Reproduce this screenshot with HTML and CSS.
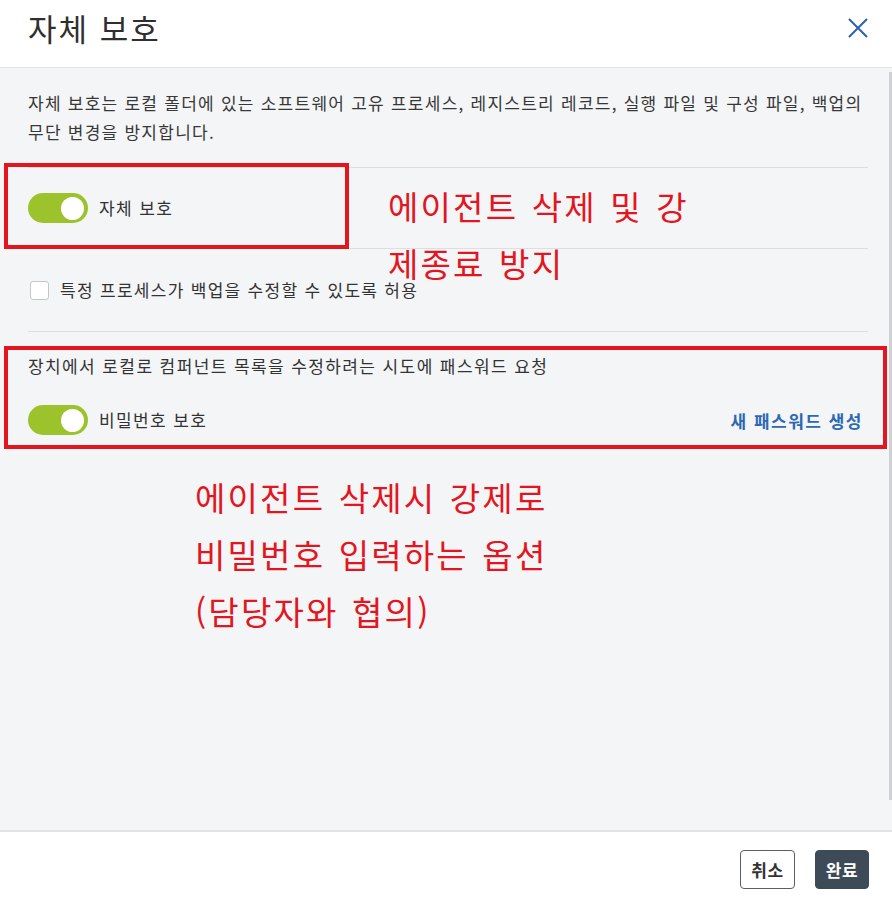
FILE: index.html
```html
<!DOCTYPE html>
<html lang="ko">
<head>
<meta charset="utf-8">
<title>자체 보호</title>
<link rel="stylesheet" href="styles.css">
</head>
<body>
<div class="dialog">
  <header class="dlg-header">
    <h1 class="dlg-title">자체 보호</h1>
    <button class="close-btn" aria-label="닫기">
      <svg width="22" height="22" viewBox="0 0 22 22"><path d="M2 2 L20 20 M20 2 L2 20" stroke="#2b62ab" stroke-width="2" fill="none"/></svg>
    </button>
  </header>
  <main class="dlg-body">
    <p class="desc">자체 보호는 로컬 폴더에 있는 소프트웨어 고유 프로세스, 레지스트리 레코드, 실행 파일 및 구성 파일, 백업의 무단 변경을 방지합니다.</p>
    <div class="section toggle-section">
      <div class="toggle-row">
        <span class="toggle on"><span class="knob"></span></span>
        <span class="label">자체 보호</span>
      </div>
    </div>
    <div class="section check-section">
      <label class="check-row">
        <span class="checkbox"></span>
        <span class="label">특정 프로세스가 백업을 수정할 수 있도록 허용</span>
      </label>
    </div>
    <div class="section pw-section">
      <p class="pw-desc">장치에서 로컬로 컴퍼넌트 목록을 수정하려는 시도에 패스워드 요청</p>
      <div class="toggle-row spread">
        <div class="toggle-left">
          <span class="toggle on"><span class="knob"></span></span>
          <span class="label">비밀번호 보호</span>
        </div>
        <a class="link">새 패스워드 생성</a>
      </div>
    </div>
    <div class="scrollbar"></div>
  </main>
  <footer class="dlg-footer">
    <button class="btn btn-outline">취소</button>
    <button class="btn btn-primary">완료</button>
  </footer>

  <div class="mark mark-1"></div>
  <div class="mark mark-2"></div>
  <div class="note note-1">에이전트 삭제 및 강<br>제종료 방지</div>
  <div class="note note-2">에이전트 삭제시 강제로<br>비밀번호 입력하는 옵션<br>(담당자와 협의)</div>
</div>
</body>
</html>
```

FILE: styles.css
```css
* { box-sizing: border-box; }
html, body {
  margin: 0;
  padding: 0;
  width: 892px;
  height: 907px;
  overflow: hidden;
  background: #fff;
}
body {
  font-family: "Noto Sans CJK KR", "Noto Sans", sans-serif;
  color: #333;
  word-break: keep-all;
}
.dialog {
  position: relative;
  width: 892px;
  height: 907px;
  display: flex;
  flex-direction: column;
}
.dlg-header {
  height: 68px;
  flex: none;
  display: flex;
  align-items: center;
  justify-content: space-between;
  padding: 0 23px 12px 28px;
  border-bottom: 1px solid #e2e4e7;
  background: #fff;
}
.dlg-title {
  margin: 0;
  font-size: 31px;
  font-weight: 400;
  letter-spacing: 2px;
  color: #2f2f2f;
  line-height: 1;
}
.close-btn {
  border: 0;
  background: none;
  padding: 0;
  width: 22px;
  height: 22px;
  display: flex;
}
.dlg-body {
  position: relative;
  flex: 1;
  background: #f4f5f7;
  padding: 0 24px 0 28px;
}
.desc {
  margin: 0;
  padding-top: 20px;
  padding-bottom: 21px;
  font-size: 17px;
  letter-spacing: 1.25px;
  line-height: 29px;
  color: #383838;
  word-break: keep-all;
}
.section {
  border-top: 1px solid #dcdee2;
}
.toggle-section {
  padding: 25px 0 25px;
}
.toggle-row {
  display: flex;
  align-items: center;
  gap: 11px;
}
.toggle-row.spread {
  justify-content: space-between;
}
.toggle-left {
  display: flex;
  align-items: center;
  gap: 11px;
}
.toggle {
  position: relative;
  width: 60px;
  height: 30px;
  border-radius: 15px;
  background: #9cc22c;
  flex: none;
  display: flex;
  align-items: center;
  justify-content: flex-end;
  padding-right: 4px;
}
.knob {
  width: 23px;
  height: 23px;
  border-radius: 50%;
  background: #fff;
}
.label {
  font-size: 17px;
  letter-spacing: 1.4px;
  color: #333;
  line-height: 24px;
}
.check-section {
  padding: 29px 0 29px 2px;
}
.check-row {
  display: flex;
  align-items: center;
  gap: 11px;
}
.checkbox {
  width: 19px;
  height: 19px;
  border: 1px solid #c4c6ca;
  border-radius: 3px;
  background: #fff;
  flex: none;
}
.check-row .label { letter-spacing: 1.3px; }
.pw-section {
  padding-top: 22px;
}
.pw-desc {
  margin: 0 0 27px;
  font-size: 17px;
  letter-spacing: 1.4px;
  line-height: 24px;
  color: #333;
}
.link {
  font-size: 17px;
  font-weight: 700;
  letter-spacing: 1.5px;
  color: #2c68b3;
  margin-right: 5px;
}
.scrollbar {
  position: absolute;
  right: 0;
  top: 4px;
  bottom: 30px;
  width: 3px;
  background: #cfd1d4;
}
.dlg-footer {
  flex: none;
  height: 77px;
  border-top: 2px solid #e1e3e6;
  background: #fff;
  display: flex;
  align-items: center;
  justify-content: flex-end;
  gap: 20px;
  padding: 0 23px 0 0;
}
.btn {
  height: 39px;
  padding: 0 6px;
  border-radius: 4px;
  font-family: inherit;
  font-size: 17px;
  font-weight: 700;
  letter-spacing: 0.5px;
  line-height: 1;
}
.btn-outline {
  width: 55px;
  background: #fff;
  border: 1px solid #5a5f66;
  color: #333;
}
.btn-primary {
  width: 54px;
  background: #3d4a58;
  border: 1px solid #3d4a58;
  color: #fff;
}
.mark {
  position: absolute;
  border: 4px solid #e3161f;
}
.mark-1 {
  left: 4px;
  top: 163px;
  width: 345px;
  height: 86px;
}
.mark-2 {
  left: 4px;
  top: 346px;
  width: 883px;
  height: 103px;
}
.note {
  position: absolute;
  color: #e3161f;
  font-size: 33px;
  line-height: 57px;
  letter-spacing: 2.2px;
  word-spacing: 2px;
  white-space: nowrap;
}
.note-1 {
  left: 388px;
  top: 178px;
}
.note-2 {
  left: 195px;
  top: 469px;
}
```
